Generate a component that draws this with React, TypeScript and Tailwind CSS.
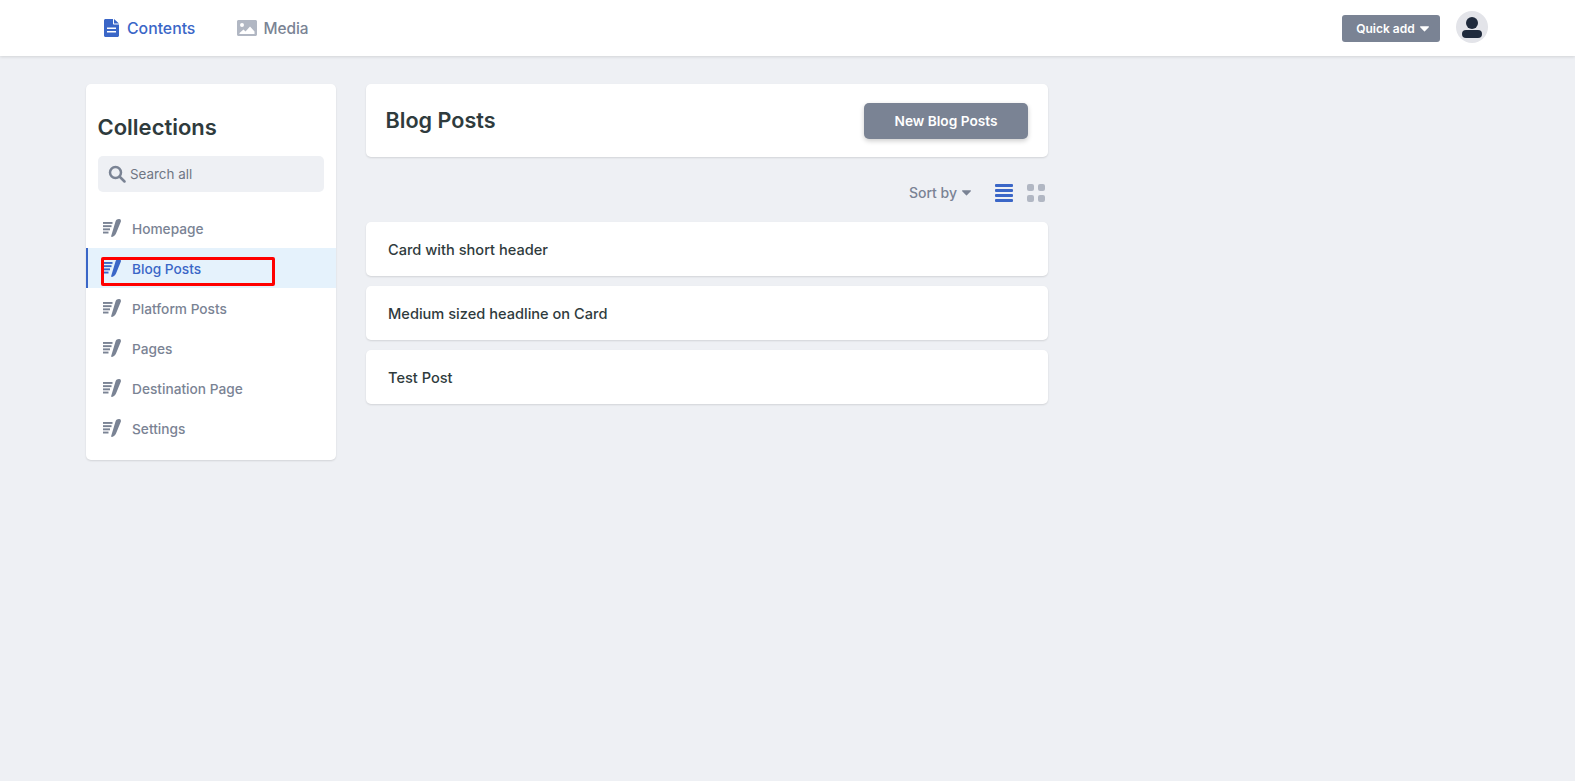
const collections = ['Homepage', 'Blog Posts', 'Platform Posts', 'Pages', 'Destination Page', 'Settings'];
const posts = ['Card with short header', 'Medium sized headline on Card', 'Test Post'];

function Caret({ className }: { className: string }) {
  return (
    <svg viewBox="0 0 10 6" className={className} fill="currentColor">
      <path d="M0.6 0h8.8c.5 0 .8.6.4 1L5.4 5.6c-.2.3-.6.3-.8 0L.2 1C-.2.6.1 0 .6 0z" />
    </svg>
  );
}

function CollectionIcon({ className }: { className: string }) {
  return (
    <svg viewBox="0 0 18 18" className={className} fill="currentColor">
      <rect x="0" y="3" width="9.500" height="1.900" />
      <rect x="0" y="6.200" width="8.500" height="1.900" />
      <rect x="0" y="9.400" width="7" height="1.900" />
      <rect x="0" y="12.600" width="5.500" height="1.900" />
      <path d="M12.500 2.400c.7-1.700 2.300-2.600 3.900-2.300 1.300.2 1.900 1.400 1.400 2.700L13 14.600c-.8 1.800-2.300 3.100-4 3.400-.6 0-.9-.2-.9-.8z" />
    </svg>
  );
}

export default function App() {
  return (
    <div className="min-h-screen bg-[#eef0f4] font-['Inter',sans-serif]">
      <header className="h-[56px] bg-white shadow-[0_1px_3px_rgba(0,0,0,0.12)] flex items-center justify-between pl-[104px] pr-[87px]">
        <nav className="flex items-center gap-[42px]">
          <a className="flex items-center gap-[8px] text-[15.8px] font-medium text-[#3a66c7]">
            <svg viewBox="0 0 15 18" className="w-[15px] h-[18px]" fill="currentColor">
              <path fillRule="evenodd" d="M1.500 0H9v4.500c0 .6.500 1 1 1h5v11c0 .8-.7 1.500-1.500 1.500h-12C.7 18 0 17.300 0 16.500v-15C0 .7.700 0 1.500 0zM10 0l5 4.500h-5zM3 8.500v1.500h9V8.500zM3 12v1.500h9V12z" />
            </svg>
            <span className="pt-[2px]">Contents</span>
          </a>
          <a className="flex items-center gap-[6px] text-[15.4px] font-medium text-[#7a8394]">
            <svg viewBox="0 0 20 16" className="w-[20px] h-[16px] text-[#b1b7c3]" fill="currentColor">
              <path fillRule="evenodd" d="M1.500 0h17c.8 0 1.500.7 1.500 1.500v13c0 .8-.7 1.500-1.500 1.500h-17C.7 16 0 15.300 0 14.500v-13C0 .7.700 0 1.500 0zM5 3a2 2 0 100 4 2 2 0 000-4zM2.500 14h15v-2.500L13 6.500 8.500 11.500 6.500 9.500 2.500 13z" />
            </svg>
            <span className="pt-[2px]">Media</span>
          </a>
        </nav>
        <div className="flex items-center gap-[16px]">
          <button className="h-[27px] w-[98px] rounded-[3px] bg-[#7a8394] text-white text-[12px] font-semibold flex items-center justify-center gap-[5px] pl-[3px] pt-[1px]">
            Quick add
            <Caret className="w-[9px] h-[6px]" />
          </button>
          <div className="w-[32px] h-[32px] mb-[2px] rounded-full bg-[#e3e4e9] flex flex-col items-center justify-center">
            <div className="w-[12px] h-[12px] rounded-full bg-[#1f2a3c]" />
            <div className="w-[20px] h-[8px] mt-[1px] rounded-full bg-[#1f2a3c]" />
          </div>
        </div>
      </header>

      <div className="flex items-start gap-[30px] pl-[86px] pt-[28px]">
        <aside className="w-[250px] h-[376px] bg-white rounded-[5px] shadow-[0_1px_2px_rgba(0,0,0,0.12)] pt-[29px]">
          <h2 className="pl-[11.5px] text-[22px] leading-[28px] font-semibold text-[#2f3b3d]">Collections</h2>
          <div className="mx-[12px] mt-[15px] h-[36px] w-[226px] rounded-[5px] bg-[#eef0f4] flex items-center gap-[4px] pl-[10px]">
            <svg viewBox="0 0 18 18" className="w-[18px] h-[18px] text-[#7a8394]" fill="none" stroke="currentColor" strokeWidth="2.500" strokeLinecap="round">
              <circle cx="7.500" cy="7.500" r="5.500" />
              <path d="M12 12l4.500 4.500" />
            </svg>
            <span className="text-[13.4px] text-[#6f7683]">Search all</span>
          </div>
          <ul className="mt-[16px] relative">
            {collections.map((name) => {
              const active = name === 'Blog Posts';
              return (
                <li
                  key={name}
                  className={
                    active
                      ? 'h-[40px] flex items-center pl-[15px] border-l-2 border-[#3a66c7] bg-[#e5f2fc] text-[#3a66c7]'
                      : 'h-[40px] flex items-center pl-[17px] text-[#7a8394]'
                  }
                >
                  <CollectionIcon className="w-[18px] h-[18px] mb-[1px]" />
                  <span className="ml-[11px] pt-[2px] text-[13.7px] font-medium">{name}</span>
                </li>
              );
            })}
            <div className="absolute left-[15px] top-[49px] w-[174px] h-[29px] border-[3px] border-[#ff0000] rounded-[2px]" />
          </ul>
        </aside>

        <main className="w-[682px]">
          <div className="h-[73px] bg-white rounded-[5px] shadow-[0_1px_2px_rgba(0,0,0,0.12)] flex items-center justify-between pl-[19.5px] pr-[20px]">
            <h1 className="text-[21.6px] font-semibold text-[#2f3b3d]">Blog Posts</h1>
            <button className="w-[164px] h-[36px] pt-[2px] rounded-[5px] bg-[#7a8394] text-white text-[13.7px] font-semibold shadow-[0_2px_5px_rgba(0,0,0,0.2)]">
              New Blog Posts
            </button>
          </div>

          <div className="h-[65px] flex items-center justify-end pr-[3px] pt-[6px]">
            <span className="text-[14px] font-medium text-[#7a8394]">Sort by</span>
            <Caret className="ml-[5px] w-[9px] h-[6px] text-[#7a8394]" />
            <div className="ml-[24px] w-[18px] flex flex-col gap-[2px]">
              <div className="h-[3px] bg-[#3a66c7] rounded-[1px]" />
              <div className="h-[3px] bg-[#3a66c7] rounded-[1px]" />
              <div className="h-[3px] bg-[#3a66c7] rounded-[1px]" />
              <div className="h-[3px] bg-[#3a66c7] rounded-[1px]" />
            </div>
            <div className="ml-[14px] grid grid-cols-2 gap-[4px]">
              <div className="w-[7px] h-[7px] bg-[#b1b7c3] rounded-[2px]" />
              <div className="w-[7px] h-[7px] bg-[#b1b7c3] rounded-[2px]" />
              <div className="w-[7px] h-[7px] bg-[#b1b7c3] rounded-[2px]" />
              <div className="w-[7px] h-[7px] bg-[#b1b7c3] rounded-[2px]" />
            </div>
          </div>

          <div className="flex flex-col gap-[10px]">
            {posts.map((title) => (
              <div
                key={title}
                className="h-[54px] pt-[3px] bg-white rounded-[5px] shadow-[0_1px_2px_rgba(0,0,0,0.12)] flex items-center pl-[22px] text-[14.6px] font-medium text-[#2f3b3d]"
              >
                {title}
              </div>
            ))}
          </div>
        </main>
      </div>
    </div>
  );
}
